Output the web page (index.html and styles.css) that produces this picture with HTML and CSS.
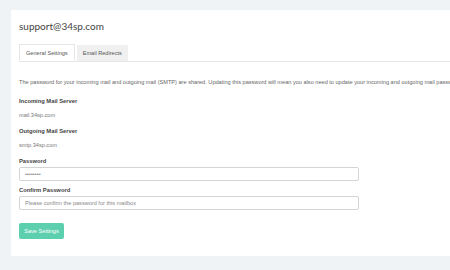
FILE: index.html
```html
<!DOCTYPE html>
<html lang="en">
<head>
    <meta charset="UTF-8">
    <title>Mailbox Settings</title>
    <link rel="stylesheet" href="styles.css">
</head>
<body>
    <div class="panel">
        <h1 class="title">support@34sp.com</h1>
        <div class="tabs">
            <div class="tab active">General Settings</div>
            <div class="tab">Email Redirects</div>
        </div>
        <p class="intro">The password for your incoming mail and outgoing mail (SMTP) are shared. Updating this password will mean you also need to update your incoming and outgoing mail passwords.</p>
        <div class="field">
            <div class="label">Incoming Mail Server</div>
            <div class="value">mail.34sp.com</div>
        </div>
        <div class="field">
            <div class="label">Outgoing Mail Server</div>
            <div class="value">smtp.34sp.com</div>
        </div>
        <div class="field">
            <label class="label" for="pw">Password</label>
            <input type="password" id="pw" value="password">
        </div>
        <div class="field tight">
            <label class="label" for="pw2">Confirm Password</label>
            <input type="password" id="pw2" placeholder="Please confirm the password for this mailbox">
        </div>
        <button class="save">Save Settings</button>
    </div>
</body>
</html>
```

FILE: styles.css
```css
html, body {
    margin: 0;
    padding: 0;
    background-color: #f0f3f6;
    height: 270px;
    overflow: hidden;
}
body {
    font-family: "Liberation Sans", Arial, sans-serif;
    color: #555;
    padding: 10px 0 0 11px;
    box-sizing: border-box;
}
.panel {
    background-color: #fff;
    width: 439px;
    height: 246px;
    box-sizing: border-box;
    padding: 0 0 0 8px;
    overflow: hidden;
}
.title {
    font-family: Lato, sans-serif;
    font-weight: 400;
    font-size: 10px;
    color: #444;
    margin: 0;
    padding-top: 9px;
    height: 25px;
    line-height: 14px;
}
.tabs {
    display: flex;
    gap: 2px;
    border-bottom: 1px solid #e6e6e6;
    height: 17px;
}
.tab {
    font-size: 5.6px;
    line-height: 16px;
    padding: 0 6px;
    color: #555;
    background-color: #f0f0f0;
    margin-top: 1px;
}
.tab.active {
    background-color: #fff;
    border: 1px solid #e6e6e6;
    border-bottom: 1px solid #fff;
    margin-top: 0;
    padding: 0 6px;
    line-height: 17px;
}
.intro {
    font-size: 5.6px;
    white-space: nowrap;
    margin: 16px 0 0 0;
    line-height: 8px;
    color: #666;
}
.field {
    margin-top: 11px;
    display: flex;
    flex-direction: column;
}
.field + .field {
    margin-top: 8px;
}
.field.tight {
    margin-top: 5px;
}
.label {
    font-size: 5.8px;
    font-weight: bold;
    color: #444;
    line-height: 8px;
}
.value {
    font-size: 5.6px;
    color: #777;
    line-height: 8px;
    margin-top: 6px;
}
input {
    width: 340px;
    height: 14px;
    margin-top: 2px;
    box-sizing: border-box;
    border: 1px solid #d4d4d4;
    border-radius: 2px;
    font-size: 5.6px;
    padding: 0 5px;
    color: #888;
    font-family: "Liberation Sans", Arial, sans-serif;
}
input::placeholder {
    color: #888;
}
.save {
    margin-top: 13px;
    width: 45px;
    height: 16px;
    border: none;
    border-radius: 2px;
    background-color: #5ccfae;
    color: #fff;
    font-size: 5.6px;
    padding: 0;
    font-family: "Liberation Sans", Arial, sans-serif;
}
```
